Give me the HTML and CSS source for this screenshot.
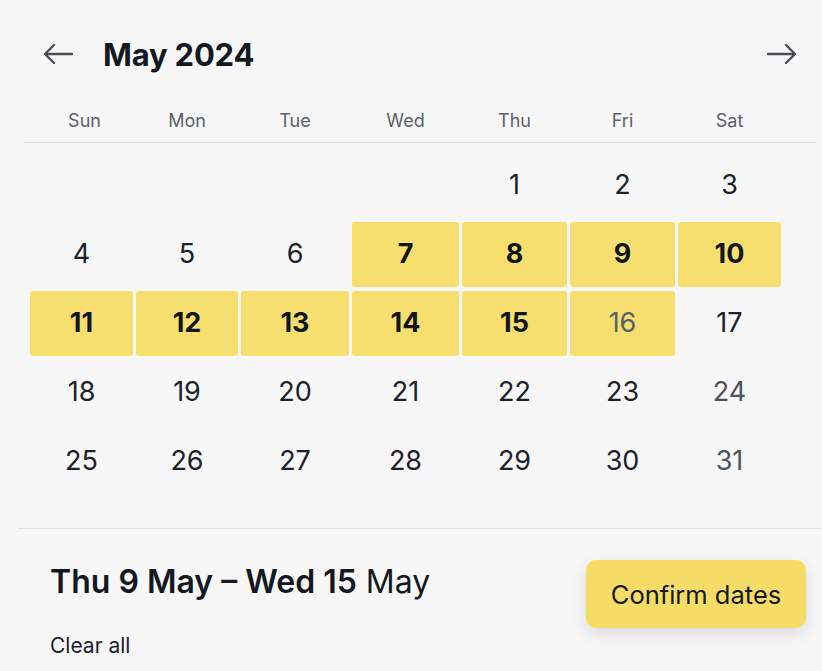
FILE: index.html
```html
<!DOCTYPE html>
<html lang="en">
<head>
<meta charset="utf-8">
<title>Select dates</title>
<link rel="stylesheet" href="styles.css">
</head>
<body>
<div class="picker">
  <div class="header">
    <button class="nav prev" aria-label="Previous month">
      <svg width="32" height="22" viewBox="0 0 32 22" fill="none" stroke="#474c57" stroke-width="2.4" stroke-linecap="round" stroke-linejoin="round"><path d="M30 11H3M12 2L3 11l9 9"/></svg>
    </button>
    <h1 class="title">May 2024</h1>
    <button class="nav next" aria-label="Next month">
      <svg width="32" height="22" viewBox="0 0 32 22" fill="none" stroke="#474c57" stroke-width="2.4" stroke-linecap="round" stroke-linejoin="round"><path d="M2 11h27M20 2l9 9-9 9"/></svg>
    </button>
  </div>
  <div class="weekdays">
    <span>Sun</span><span>Mon</span><span>Tue</span><span>Wed</span><span>Thu</span><span>Fri</span><span>Sat</span>
  </div>
  <div class="rule"></div>
  <div class="days">
    <span class="day empty"></span><span class="day empty"></span><span class="day empty"></span><span class="day empty"></span>
    <span class="day">1</span><span class="day">2</span><span class="day">3</span>
    <span class="day">4</span><span class="day">5</span><span class="day">6</span>
    <span class="day sel">7</span><span class="day sel">8</span><span class="day sel">9</span><span class="day sel">10</span>
    <span class="day sel">11</span><span class="day sel">12</span><span class="day sel">13</span><span class="day sel">14</span><span class="day sel">15</span>
    <span class="day sel muted">16</span><span class="day">17</span>
    <span class="day">18</span><span class="day">19</span><span class="day">20</span><span class="day">21</span><span class="day">22</span><span class="day">23</span><span class="day soft">24</span>
    <span class="day">25</span><span class="day">26</span><span class="day">27</span><span class="day">28</span><span class="day">29</span><span class="day">30</span><span class="day soft">31</span>
  </div>
  <div class="rule bottom"></div>
  <div class="footer">
    <div class="summary">
      <p class="range"><span class="strong">Thu 9 May – Wed 15</span> May</p>
      <a class="clear" href="#">Clear all</a>
    </div>
    <button class="confirm">Confirm dates</button>
  </div>
</div>
</body>
</html>
```

FILE: styles.css
```css
* { box-sizing: border-box; }
html, body { margin: 0; padding: 0; }
body {
  background: #f7f7f7;
  font-family: Inter, "Noto Sans", "Liberation Sans", sans-serif;
  color: #1b1f29;
  width: 822px;
  height: 671px;
  overflow: hidden;
}
.picker { width: 822px; }
.header {
  display: flex;
  align-items: center;
  height: 36px;
  margin-top: 36px;
  padding: 0 24px 0 42px;
}
.nav {
  background: none;
  border: 0;
  padding: 0;
  display: flex;
  cursor: pointer;
}
.title {
  margin: 0 0 0 29px;
  font-size: 31px;
  font-weight: 700;
  letter-spacing: -0.2px;
  color: #141821;
  flex: 1;
}
.weekdays,
.days {
  display: grid;
  grid-template-columns: 103px 102px 108px 107px 105px 105px 103px;
  column-gap: 3px;
  margin-left: 30px;
}
.weekdays {
  margin-top: 37px;
  line-height: 24px;
  font-size: 18px;
  color: #5a5f6a;
  text-align: center;
}
.weekdays span:first-child { padding-left: 6px; }
.rule {
  height: 1px;
  background: #dcdcde;
  margin: 9px 6px 0 24px;
}
.days {
  grid-auto-rows: 65px;
  row-gap: 4px;
  margin-top: 10px;
}
.day {
  display: flex;
  align-items: center;
  justify-content: center;
  padding-bottom: 3px;
  font-size: 27px;
  color: #1d212b;
  border-radius: 3px;
}
.day.sel {
  background: #f6df6f;
  font-weight: 700;
  color: #11151d;
}
.day.muted { font-weight: 400; color: #5b606b; }
.day.soft { color: #4d525d; }
.rule.bottom {
  margin: 34px 0 0 18px;
  background: #e3e3e5;
}
.footer {
  display: flex;
  justify-content: space-between;
  align-items: flex-start;
  padding: 31px 16px 0 50px;
}
.range {
  margin: 3px 0 0;
  font-size: 32px;
  line-height: 38px;
  color: #141821;
}
.strong { font-weight: 600; }
.clear {
  display: block;
  margin-top: 33px;
  font-size: 21px;
  line-height: 24px;
  color: #1d212b;
  text-decoration: none;
}
.confirm {
  width: 220px;
  height: 68px;
  border: 0;
  border-radius: 10px;
  background: #f5dc66;
  font-family: inherit;
  font-size: 25.5px;
  color: #141821;
  box-shadow: 0 6px 16px rgba(0,0,0,0.12);
  cursor: pointer;
}
```
